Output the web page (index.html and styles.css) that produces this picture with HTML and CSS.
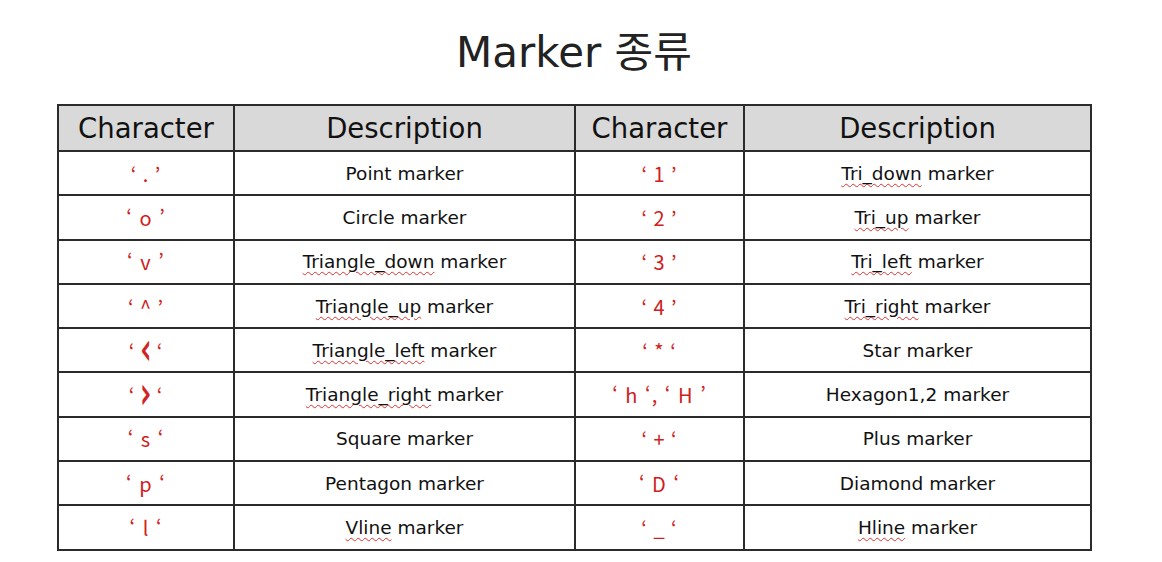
FILE: index.html
```html
<!DOCTYPE html>
<html lang="ko">
<head>
<meta charset="utf-8">
<title>Marker 종류</title>
<link rel="stylesheet" href="styles.css">
</head>
<body>
<h1 class="title">Marker 종류</h1>
<table class="markers">
  <colgroup>
    <col class="c1"><col class="c2"><col class="c3"><col class="c4">
  </colgroup>
  <thead>
    <tr><th>Character</th><th>Description</th><th>Character</th><th>Description</th></tr>
  </thead>
  <tbody>
    <tr><td class="ch">‘ . ’</td><td>Point marker</td><td class="ch">‘ 1 ’</td><td><span class="sp">Tri_down</span> marker</td></tr>
    <tr><td class="ch">‘ o ’</td><td>Circle marker</td><td class="ch">‘ 2 ’</td><td><span class="sp">Tri_up</span> marker</td></tr>
    <tr><td class="ch">‘ v ’</td><td><span class="sp">Triangle_down</span> marker</td><td class="ch">‘ 3 ’</td><td><span class="sp">Tri_left</span> marker</td></tr>
    <tr><td class="ch">‘ ^ ’</td><td><span class="sp">Triangle_up</span> marker</td><td class="ch">‘ 4 ’</td><td><span class="sp">Tri_right</span> marker</td></tr>
    <tr><td class="ch">‘ <span class="chev">‹</span> ‘</td><td><span class="sp">Triangle_left</span> marker</td><td class="ch">‘ * ‘</td><td>Star marker</td></tr>
    <tr><td class="ch">‘ <span class="chev">›</span> ‘</td><td><span class="sp">Triangle_right</span> marker</td><td class="ch">‘ h ‘, ‘ H ’</td><td>Hexagon1,2 marker</td></tr>
    <tr><td class="ch">‘ s ‘</td><td>Square marker</td><td class="ch">‘ + ‘</td><td>Plus marker</td></tr>
    <tr><td class="ch">‘ p ‘</td><td>Pentagon marker</td><td class="ch">‘ D ‘</td><td>Diamond marker</td></tr>
    <tr><td class="ch">‘ l ‘</td><td><span class="sp">Vline</span> marker</td><td class="ch">‘ _ ‘</td><td><span class="sp">Hline</span> marker</td></tr>
  </tbody>
</table>
</body>
</html>
```
FILE: styles.css
```css
html, body {
  margin: 0;
  padding: 0;
  background: #ffffff;
}
body {
  font-family: "DejaVu Sans", "Noto Sans CJK KR", sans-serif;
  color: #111;
  padding-top: 28px;
}
.title {
  margin: 0 0 26px 0;
  text-align: center;
  font-family: "DejaVu Sans", "Noto Sans CJK KR", sans-serif;
  font-weight: 400;
  font-size: 42px;
  line-height: 50px;
  color: #222;
  padding-right: 14px;
}
.markers {
  margin-left: 57px;
  width: 1033px;
  border-collapse: collapse;
  table-layout: fixed;
}
.c1 { width: 176px; }
.c2 { width: 341px; }
.c3 { width: 169px; }
.c4 { width: 347px; }
.markers th, .markers td {
  border: 2px solid #2b2b2b;
  text-align: center;
  padding: 0;
}
.markers th {
  background: #d9d9d9;
  font-weight: 400;
  font-size: 27.5px;
  height: 44px;
  color: #111;
}
.markers td {
  height: 42.3px;
  font-size: 18.5px;
  color: #111;
}
.markers td.ch {
  color: #d02020;
  font-family: "Noto Sans CJK KR", "Noto Sans", sans-serif;
  font-size: 20px;
  letter-spacing: 1px;
}
.chev {
  display: inline-block;
  font-family: "DejaVu Sans", sans-serif;
  font-size: 24px;
  font-weight: 400;
  line-height: 14px;
  -webkit-text-stroke: 0.6px #d02020;
  transform: scale(1.15, 1.7) translateY(-1px);
}
.sp {
  text-decoration: underline wavy #e03030;
  text-decoration-thickness: 1px;
  text-underline-offset: 3px;
}
```
